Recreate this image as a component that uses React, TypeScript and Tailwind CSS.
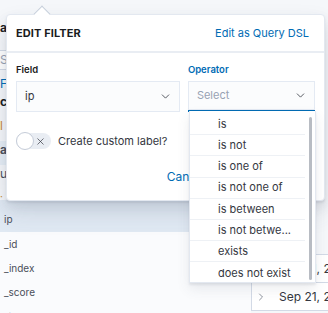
import { ChevronDown, ChevronRight, X } from "lucide-react";

const fields = ["_id", "_index", "_score", "_type"];
const operators = [
  "is",
  "is not",
  "is one of",
  "is not one of",
  "is between",
  "is not betwe...",
  "exists",
  "does not exist",
];

function DocRow() {
  return (
    <div className="flex h-[28px] items-center border-b border-l border-[#d3dae6] bg-white pl-[3px] text-[12px] text-[#343741]">
      <ChevronRight className="h-[12px] w-[12px] text-[#69707d]" strokeWidth={1.5} />
      <span className="ml-[12px] whitespace-nowrap">Sep 21, 2019 @ 10:32:11</span>
    </div>
  );
}

export default function App() {
  return (
    <div
      className="relative h-[313px] w-[328px] overflow-hidden bg-[#f5f7fa]"
      style={{ fontFamily: "Inter, 'Noto Sans', sans-serif" }}
    >
      {/* page behind the popover */}
      <div className="flex h-full">
        <div className="w-[251px] shrink-0 text-[10px] text-[#4a4f5a]">
          <div className="h-[19px]" />
          <div className="h-[18px] text-[12px] font-bold text-[#1a1c21]">al</div>
          <div className="mt-[13px] h-[20px] border-y border-[#d3dae6] bg-white text-[12px] text-[#98a2b3]">S</div>
          <div className="mt-[5px] h-[18px] text-[12px] text-[#006bb4]">F</div>
          <div className="h-[18px] text-[12px] font-bold text-[#1a1c21]">ct</div>
          <div className="mt-[6px] h-[24px] text-[12px] text-[#c98a2e]">l</div>
          <div className="h-[24px] bg-[#e6eef6] text-[12px] font-bold">a</div>
          <div className="h-[24px] text-[12px]">u</div>
          <div className="h-[11px] text-[#c98a2e]">·</div>
          <div className="flex h-[32px] items-end bg-[#e0e9f3] pb-[5px] pl-[4px]">ip</div>
          {fields.map((f) => (
            <div key={f} className="flex h-[24px] items-center bg-[#fafbfd] pl-[4px]">
              {f}
            </div>
          ))}
        </div>
        <div className="flex-1 pt-[254px]">
          <div className="border-t border-[#d3dae6]">
            <DocRow />
            <DocRow />
          </div>
        </div>
      </div>

      {/* edit filter popover */}
      <div className="absolute left-[6px] top-[14px] h-[187px] w-[319px] rounded-[4px] border border-[#e3e8f0] bg-white shadow-[0_12px_24px_0_rgba(65,78,101,0.12),0_6px_12px_0_rgba(65,78,101,0.1),0_2px_2px_0_rgba(65,78,101,0.1)]">
        <div className="absolute left-[29px] top-[-7px] z-10 h-[12px] w-[12px] rotate-45 border-l border-t border-[#c6cfdb] bg-white" />
        <div className="relative flex h-[38px] items-center justify-between border-b-2 border-[#e9edf3] pl-[9px] pr-[15px]">
          <span className="text-[11px] font-bold tracking-[0.01em] text-[#1a1c21]">EDIT FILTER</span>
          <span className="text-[11px] text-[#006bb4]">Edit as Query DSL</span>
        </div>
        <div className="px-[9px] pt-[9px]">
          <div className="flex gap-[8px]">
            <div className="w-[165px]">
              <div className="h-[16px] text-[9.5px] font-semibold leading-[16px] text-[#1a1c21]">Field</div>
              <div className="mt-[3px] flex h-[31px] items-center justify-between bg-[#fbfcfd] pl-[9px] pr-[8px] text-[11px] text-[#343741] shadow-[inset_0_0_0_1px_rgba(32,83,154,0.1)]">
                <span>ip</span>
                <ChevronDown className="h-[13px] w-[13px] text-[#343741]" strokeWidth={1.5} />
              </div>
            </div>
            <div className="w-[128px]">
              <div className="h-[16px] text-[9.5px] font-semibold leading-[16px] text-[#006bb4]">Operator</div>
              <div className="mt-[3px] flex h-[31px] items-center justify-between border-b-2 border-[#006bb4] bg-[#fbfcfd] pl-[9px] pr-[8px] text-[11px] text-[#98a2b3] shadow-[inset_0_0_0_1px_rgba(32,83,154,0.1)]">
                <span>Select</span>
                <ChevronDown className="h-[13px] w-[13px] text-[#343741]" strokeWidth={1.5} />
              </div>
            </div>
          </div>
          <div className="mt-[20px] flex h-[18px] items-center gap-[7px]">
            <div className="relative flex h-[16px] w-[35px] items-center rounded-full bg-[#e9edf3]">
              <div className="absolute left-0 top-[-1px] h-[18px] w-[18px] rounded-full border border-[#c5ccd8] bg-white" />
              <X className="ml-[19px] h-[11px] w-[11px] text-[#343741]" strokeWidth={1.5} />
            </div>
            <span className="text-[11px] text-[#343741]">Create custom label?</span>
          </div>
          <div className="mt-[11px] flex h-[32px] items-center justify-end gap-[8px]">
            <span className="px-[8px] text-[12px] text-[#006bb4]">Cancel</span>
            <span className="flex h-[32px] w-[93px] items-center justify-center rounded-[4px] bg-[#006bb4] text-[12px] text-white">
              Save
            </span>
          </div>
        </div>
      </div>

      {/* operator dropdown */}
      <div className="absolute left-[189px] top-[111px] h-[172px] w-[127px] border border-t-0 border-[#e3e8f0] bg-white pt-[3px] shadow-[0_6px_12px_0_rgba(65,78,101,0.1),0_2px_2px_0_rgba(65,78,101,0.1)]">
        {operators.map((op, i) => (
          <div
            key={op}
            className={
              i < operators.length - 1
                ? "mr-[10px] flex h-[21.2px] items-center border-b border-[#eef1f5] pl-[28px] text-[11px] text-[#343741]"
                : "mr-[10px] flex h-[21.2px] items-center pl-[28px] text-[11px] text-[#343741]"
            }
          >
            <span className="whitespace-nowrap">{op}</span>
          </div>
        ))}
        <div className="absolute right-[3px] top-[6px] h-[163px] w-[3px] rounded-full bg-[#b8bcc3]" />
      </div>
    </div>
  );
}
